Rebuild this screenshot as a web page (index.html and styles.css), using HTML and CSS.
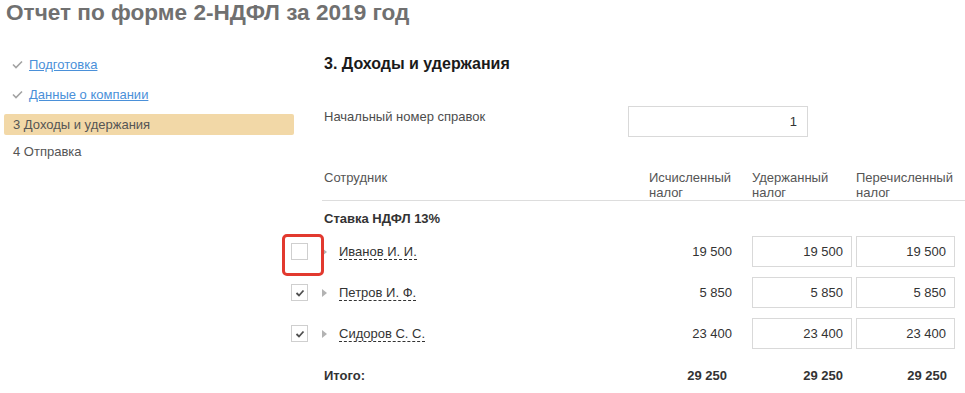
FILE: index.html
```html
<!doctype html>
<html>
  <head>
    <meta charset="utf-8">
    <title>Отчет по форме 2-НДФЛ за 2019 год</title>
    <link rel="stylesheet" href="styles.css">
  </head>
  <body>
    <h1 class="title">Отчет по форме 2-НДФЛ за 2019 год</h1>

    <div class="layout">
      <nav class="steps">
        <div class="step done">
          <svg class="tick" width="11" height="9" viewBox="0 0 11 9"><path d="M1 4.5 L4 7.5 L10 1.5" fill="none" stroke="#a3a3a3" stroke-width="1.6"/></svg>
          <a href="#">Подготовка</a>
        </div>
        <div class="step done">
          <svg class="tick" width="11" height="9" viewBox="0 0 11 9"><path d="M1 4.5 L4 7.5 L10 1.5" fill="none" stroke="#a3a3a3" stroke-width="1.6"/></svg>
          <a href="#">Данные о компании</a>
        </div>
        <div class="step current">3 Доходы и удержания</div>
        <div class="step last">4 Отправка</div>
      </nav>

      <main class="content">
        <h2>3. Доходы и удержания</h2>

        <div class="field">
          <label class="field-label">Начальный номер справок</label>
          <div class="input wide">1</div>
        </div>

        <div class="grid">
          <div class="cell head-gap"></div>
          <div class="cell head name-col">Сотрудник</div>
          <div class="cell head calc-col">Исчисленный<br>налог</div>
          <div class="cell head held-col">Удержанный<br>налог</div>
          <div class="cell head paid-col">Перечисленный<br>налог</div>
          <div class="cell head"></div>

          <div class="cell"></div>
          <div class="cell group">Ставка НДФЛ 13%</div>
          <div class="cell"></div><div class="cell"></div><div class="cell"></div><div class="cell"></div>

          <div class="cell row check-col">
            <span class="checkbox marked"></span>
          </div>
          <div class="cell row name-col"><span class="arrow"></span><span class="person">Иванов И. И.</span></div>
          <div class="cell row calc-col">19 500</div>
          <div class="cell row held-col"><div class="input">19 500</div></div>
          <div class="cell row paid-col"><div class="input">19 500</div></div>
          <div class="cell row"></div>

          <div class="cell row check-col">
            <span class="checkbox"><svg width="14" height="14" viewBox="0 0 14 14"><path d="M3.5 7 L6 9.5 L10.5 4.5" fill="none" stroke="#505050" stroke-width="1.8"/></svg></span>
          </div>
          <div class="cell row name-col"><span class="arrow"></span><span class="person">Петров И. Ф.</span></div>
          <div class="cell row calc-col">5 850</div>
          <div class="cell row held-col"><div class="input">5 850</div></div>
          <div class="cell row paid-col"><div class="input">5 850</div></div>
          <div class="cell row"></div>

          <div class="cell row check-col">
            <span class="checkbox"><svg width="14" height="14" viewBox="0 0 14 14"><path d="M3.5 7 L6 9.5 L10.5 4.5" fill="none" stroke="#505050" stroke-width="1.8"/></svg></span>
          </div>
          <div class="cell row name-col"><span class="arrow"></span><span class="person">Сидоров С. С.</span></div>
          <div class="cell row calc-col">23 400</div>
          <div class="cell row held-col"><div class="input">23 400</div></div>
          <div class="cell row paid-col"><div class="input">23 400</div></div>
          <div class="cell row"></div>

          <div class="cell total"></div>
          <div class="cell total name-col">Итого:</div>
          <div class="cell total calc-col">29 250</div>
          <div class="cell total held-col num-in">29 250</div>
          <div class="cell total paid-col num-in">29 250</div>
          <div class="cell total"></div>
        </div>
      </main>
    </div>
  </body>
</html>
```

FILE: styles.css
```css
* {
  box-sizing: border-box;
}

html,
body {
  margin: 0;
  padding: 0;
  background: #fff;
}
body {
  font-family: "Liberation Sans", Arial, sans-serif;
  font-size: 13px;
  color: #444;
  overflow: hidden;
}

.title {
  margin: 0;
  padding: 0 0 0 6px;
  font-size: 22.6px;
  line-height: 26px;
  font-weight: bold;
  color: #707070;
}

.layout {
  display: flex;
  margin-top: 26px;
}

/* steps */
.steps {
  flex: none;
  width: 290px;
  margin-left: 4px;
  padding-top: 2px;
  display: flex;
  flex-direction: column;
  gap: 9px;
}
.step {
  height: 21px;
  line-height: 21px;
  padding-left: 9px;
  color: #555;
  display: flex;
  align-items: center;
}
.step.done {
  padding-left: 8px;
}
.step.last {
  margin-top: -3px;
}
.tick {
  margin-right: 6px;
}
.step a {
  color: #4a90d9;
  text-decoration: underline;
}
.step.current {
  background: #f2d8a7;
  border-radius: 2px;
}

/* content */
.content {
  flex: 1;
  margin-left: 28px;
}
h2 {
  margin: 2px 0 0;
  padding-left: 2px;
  font-size: 16px;
  line-height: 20px;
  font-weight: bold;
  color: #1a1a1a;
}

.field {
  display: flex;
  align-items: flex-start;
  margin-top: 32px;
}
.field-label {
  width: 306px;
  padding: 3px 0 0 2px;
  line-height: 15px;
  color: #4d4d4d;
}
.input {
  height: 31px;
  line-height: 29px;
  border: 1px solid #d9d9d9;
  text-align: right;
  padding: 0 8px;
  color: #333;
  background: #fff;
}
.input.wide {
  width: 180px;
  padding-right: 10px;
}

/* table */
.grid {
  margin-top: 33px;
  margin-left: -38px;
  display: grid;
  grid-template-columns: 38px 1fr 88px 120px 103px 10px;
}
.cell {
  color: #333;
}
.head {
  line-height: 15px;
  height: 31px;
  border-bottom: 1px solid #ddd;
  color: #555;
}
.head-gap {
  border-bottom: none;
}
.name-col {
  padding-left: 2px;
}
.calc-col {
  padding: 0 5px;
  text-align: right;
}
.head.calc-col {
  text-align: left;
}
.head.held-col {
  padding-left: 20px;
}
.head.paid-col {
  padding-left: 4px;
}
.group {
  padding: 8px 0 2px 2px;
  line-height: 20px;
  font-weight: bold;
}

.row {
  height: 41px;
  padding: 5px 0;
  display: flex;
  align-items: center;
}
.row.calc-col {
  justify-content: flex-end;
}
.row.held-col .input {
  margin-left: 20px;
  width: 100px;
}
.row.paid-col .input {
  margin-left: 4px;
  width: 99px;
}
.check-col {
  padding-left: 7px;
}
.checkbox {
  position: relative;
  width: 17px;
  height: 17px;
  border: 1px solid #cfcfcf;
  display: flex;
  align-items: center;
  justify-content: center;
  background: #fff;
}
.checkbox.marked::after {
  content: "";
  position: absolute;
  left: -10px;
  top: -10px;
  width: 36px;
  height: 36px;
  border: 3px solid #e2392f;
  border-radius: 5px;
}
.arrow {
  width: 0;
  height: 0;
  border-left: 5px solid #b3b3b3;
  border-top: 4px solid transparent;
  border-bottom: 4px solid transparent;
  margin-right: 12px;
}
.person {
  display: inline-block;
  line-height: 15px;
  border-bottom: 1px dashed #333;
}

.total {
  padding-top: 12px;
  line-height: 20px;
  font-weight: bold;
}
.total.num-in {
  text-align: right;
  padding-right: 9px;
}
.total.paid-col {
  padding-right: 8px;
}
```
